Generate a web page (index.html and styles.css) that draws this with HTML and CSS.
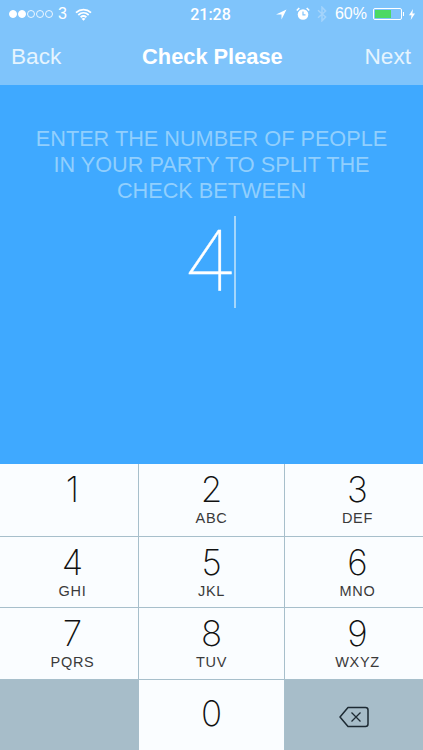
FILE: index.html
```html
<!DOCTYPE html>
<html lang="en">
<head>
<meta charset="utf-8">
<title>Check Please</title>
<link rel="stylesheet" href="styles.css">
</head>
<body>
<div class="phone">
  <header class="top">
    <div class="status">
      <div class="status-left">
        <span class="signal"><i class="on"></i><i class="on"></i><i></i><i></i><i></i></span>
        <span class="carrier">3</span>
        <svg class="wifi" width="17" height="13" viewBox="0 0 17 13"><path d="M1 4.600C5.400.6 11.600.6 16 4.600M3.300 7C6.400 4.200 10.600 4.200 13.700 7M5.600 9.200C7.300 7.800 9.700 7.800 11.400 9.200" fill="none" stroke="#fff" stroke-width="1.800"/><path d="M8.500 12.800 6.500 10.700C7.800 9.800 9.200 9.800 10.500 10.700Z" fill="#fff"/></svg>
      </div>
      <div class="clock">21:28</div>
      <div class="status-right">
        <svg class="ic-arrow" width="11" height="11" viewBox="0 0 11 11"><path d="M10.500.5 0 5.500H5.500V10.500Z" fill="#fff"/></svg>
        <svg class="ic-alarm" width="14" height="14" viewBox="0 0 14 14"><circle cx="7" cy="7.500" r="5.300" fill="#fff"/><path d="M7 4.500V7.800H9.500" fill="none" stroke="#7fc4fb" stroke-width="1.200"/><path d="M.8 3.500 3.300 1M13.200 3.500 10.700 1" stroke="#fff" stroke-width="1.600"/></svg>
        <svg class="ic-bt" width="10" height="16" viewBox="0 0 10 16"><path d="M1 4.200 8.600 11 5 14.800V1.200L8.600 5 1 11.800" fill="none" stroke="#a4d4fb" stroke-width="1.500"/></svg>
        <span class="pct">60%</span>
        <span class="battery"><span class="cell"><span class="level"></span></span><span class="nub"></span></span>
        <svg class="ic-bolt" width="6" height="11" viewBox="0 0 6 11"><path d="M4 0 0 6.200H2.500L1.700 11 6 4.600H3.400Z" fill="#fff"/></svg>
      </div>
    </div>
    <nav class="nav">
      <span class="nav-btn">Back</span>
      <span class="nav-title">Check Please</span>
      <span class="nav-btn">Next</span>
    </nav>
  </header>
  <main class="prompt">
    <p class="prompt-text">ENTER THE NUMBER OF PEOPLE<br>IN YOUR PARTY TO SPLIT THE<br>CHECK BETWEEN</p>
    <div class="entry"><span class="value">4</span><span class="caret"></span></div>
  </main>
  <section class="keypad">
    <div class="key"><span class="digit">1</span></div>
    <div class="key"><span class="digit">2</span><span class="letters">ABC</span></div>
    <div class="key"><span class="digit">3</span><span class="letters">DEF</span></div>
    <div class="key"><span class="digit">4</span><span class="letters">GHI</span></div>
    <div class="key"><span class="digit">5</span><span class="letters">JKL</span></div>
    <div class="key"><span class="digit">6</span><span class="letters">MNO</span></div>
    <div class="key"><span class="digit">7</span><span class="letters">PQRS</span></div>
    <div class="key"><span class="digit">8</span><span class="letters">TUV</span></div>
    <div class="key"><span class="digit">9</span><span class="letters">WXYZ</span></div>
    <div class="key key-dark"></div>
    <div class="key key-zero"><span class="digit">0</span></div>
    <div class="key key-dark">
      <svg class="backspace" width="30" height="22" viewBox="0 0 30 22"><path d="M9 1.500H26.500A2.500 2.500 0 0 1 29 4V18A2.500 2.500 0 0 1 26.500 20.500H9L1 11Z" fill="none" stroke="#1d2a33" stroke-width="1.500" stroke-linejoin="round"/><path d="M12.500 6.500 21.500 15.500M21.500 6.500 12.500 15.500" stroke="#1d2a33" stroke-width="1.300"/></svg>
    </div>
  </section>
</div>
</body>
</html>
```
FILE: styles.css
```css
* { box-sizing: border-box; }
html, body { margin: 0; padding: 0; }
body { font-family: "Liberation Sans", Arial, sans-serif; background: #3fa9ff; }
.phone { width: 423px; height: 750px; display: flex; flex-direction: column; overflow: hidden; }
.top { height: 85px; background: #7fc4fb; color: #fff; flex: none; }
.status { height: 28px; display: grid; grid-template-columns: 1fr auto 1fr; align-items: center; padding: 0 8px 0 9px; font-size: 16px; }
.status-left, .status-right { display: flex; align-items: center; }
.status-left { gap: 5px; }
.status-right { justify-content: flex-end; }
.signal { display: flex; gap: 1px; }
.signal i { width: 8px; height: 8px; border-radius: 50%; border: 1px solid #fff; display: block; opacity: .85; }
.signal i.on { background: #fff; opacity: 1; }
.carrier { font-size: 16px; }
.wifi { margin-left: 3px; }
.clock { font-family: Roboto, sans-serif; font-size: 16px; font-weight: 500; text-align: center; margin-left: -3px; }
.ic-alarm { margin-left: 9px; }
.ic-bt { margin-left: 7px; }
.pct { font-size: 16px; margin-left: 8px; }
.battery { display: flex; align-items: center; margin-left: 6px; }
.ic-bolt { margin-left: 5px; }
.cell { width: 29px; height: 12px; border: 1px solid #fff; padding: 1px; display: block; border-radius: 2px; }
.level { display: block; width: 16px; height: 100%; background: #4cd964; }
.nub { width: 1px; height: 4px; background: #fff; display: block; margin-left: 1px; }
.nav { height: 57px; display: flex; justify-content: space-between; align-items: center; padding: 1px 12px 0 11px; }
.nav-btn { font-size: 22.600px; color: #e6f4fe; }
.nav-title { font-size: 21.800px; font-weight: 700; margin-right: 1px; }
.prompt { height: 379px; background: #3fa9ff; text-align: center; padding-top: 41px; flex: none; }
.prompt-text { margin: 0; font-family: "Liberation Sans", sans-serif; font-size: 21.700px; line-height: 26px; color: #91cffd; }
.entry { display: flex; justify-content: center; align-items: center; height: 92px; margin-top: 12px; padding-right: 2px; }
.value { font-family: Roboto, sans-serif; font-weight: 100; font-size: 86px; line-height: 92px; color: #fff; -webkit-text-stroke: .4px #fff; }
.caret { width: 2px; height: 92px; background: #a3d6fc; margin-left: 1px; }
.keypad { flex: 1; display: grid; grid-template-columns: 139px 146px 138px; grid-template-rows: 73px 71px 72px 70px; background: #fafdff; }
.key { display: flex; flex-direction: column; align-items: center; border-right: 1px solid #a7bfcb; border-bottom: 1px solid #a7bfcb; padding-top: 4px; color: #111; }
.key:nth-child(3n) { border-right: 0; padding-left: 7px; }
.key:nth-child(3n+1) { padding-left: 7px; }
.key:nth-last-child(-n+3) { border-bottom: 0; }
.key-zero { padding-top: 12px; }
.digit { font-family: Inter, sans-serif; font-weight: 250; font-size: 35px; line-height: 42px; }
.letters { font-family: "Liberation Sans", sans-serif; font-size: 14.500px; line-height: 15px; margin-top: 1px; color: #3a3a3a; letter-spacing: .7px; }
.key-dark { background: #a7bdc9; border: 0; justify-content: center; padding: 3px 0 0; }
.key-dark:nth-child(3n), .key-dark:nth-child(3n+1) { padding-left: 0; }
.backspace { display: block; }
```
